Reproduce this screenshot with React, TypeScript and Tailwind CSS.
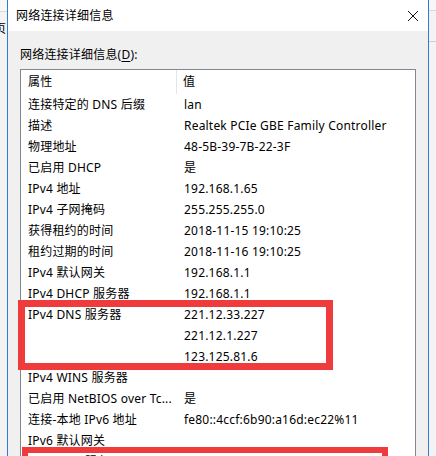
import React from "react";

const FONT = {
  fontFamily: '"Segoe UI", "Noto Sans", "Noto Sans CJK SC", sans-serif',
};

/** rows of the details list, empty label = continuation line */
const ROWS: [string, string][] = [
  ["连接特定的 DNS 后缀", "lan"],
  ["描述", "Realtek PCIe GBE Family Controller"],
  ["物理地址", "48-5B-39-7B-22-3F"],
  ["已启用 DHCP", "是"],
  ["IPv4 地址", "192.168.1.65"],
  ["IPv4 子网掩码", "255.255.255.0"],
  ["获得租约的时间", "2018-11-15 19:10:25"],
  ["租约过期的时间", "2018-11-16 19:10:25"],
  ["IPv4 默认网关", "192.168.1.1"],
  ["IPv4 DHCP 服务器", "192.168.1.1"],
  ["IPv4 DNS 服务器", "221.12.33.227"],
  ["", "221.12.1.227"],
  ["", "123.125.81.6"],
  ["IPv4 WINS 服务器", ""],
  ["已启用 NetBIOS over Tc...", "是"],
  ["连接-本地 IPv6 地址", "fe80::4ccf:6b90:a16d:ec22%11"],
  ["IPv6 默认网关", ""],
  ["IPv6 DNS 服务器", ""],
];

export default function App() {
  return (
    <div
      className="relative flex h-[456px] w-[436px] overflow-hidden bg-[#f0f0f0] text-[12px] tracking-[0.2px] text-black"
      style={FONT}
    >
      {/* window behind the dialog, left edge */}
      <div className="flex w-[7px] shrink-0 flex-col overflow-hidden bg-[#f3f3f3]">
        <div className="h-[12px] border-b border-[#d9d9d9] bg-[#f7f7f7]" />
        <div className="mt-[10px] ml-[-6px] leading-[14px]">页</div>
      </div>

      {/* dialog */}
      <div className="flex w-[422px] shrink-0 flex-col border-x border-[#2f7bd3] bg-[#f0f0f0]">
        {/* title bar */}
        <div className="flex h-[31px] shrink-0 items-center justify-between bg-white pl-[8px] pr-[8px]">
          <span className="leading-[16px]">网络连接详细信息</span>
          <svg width="12" height="12" viewBox="0 0 12 12" className="mr-[1px]">
            <path d="M1 1 L11 11 M11 1 L1 11" stroke="#111" strokeWidth="1" />
          </svg>
        </div>

        {/* body */}
        <div className="flex min-h-0 flex-1 flex-col pl-[12px] pr-[12px] pt-[16px]">
          <div className="leading-[16px]">
            网络连接详细信息(<span className="underline underline-offset-2">D</span>):
          </div>

          <div className="mt-[6px] flex-1 border border-[#828790] bg-white">
            <div className="flex h-[24px] items-center">
              <div className="flex h-full w-[156px] items-center border-r border-[#e5e5e5] pl-[7px]">
                属性
              </div>
              <div className="pl-[6px]">值</div>
            </div>
            {ROWS.map(([k, v], i) => (
              <div key={i} className="flex h-[21px] items-center whitespace-nowrap">
                <div className="w-[156px] shrink-0 pl-[7px]">{k}</div>
                <div className="pl-[7px]">{v}</div>
              </div>
            ))}
          </div>
        </div>
      </div>

      {/* window behind the dialog, right edge */}
      <div className="flex w-[7px] shrink-0 flex-col bg-[#f3f3f3]">
        <div className="h-[11px] border-b border-[#d9d9d9] bg-[#f7f7f7]" />
        <div className="mt-[30px] border-b border-[#cfcfcf]" />
      </div>

      {/* red annotation boxes */}
      <div className="absolute left-[18px] top-[300px] h-[70px] w-[315px] border-[7px] border-[#ef3b3b]" />
      <div className="absolute left-[22px] top-[447px] h-[40px] w-[366px] border-[6px] border-[#ef3b3b]" />
    </div>
  );
}
